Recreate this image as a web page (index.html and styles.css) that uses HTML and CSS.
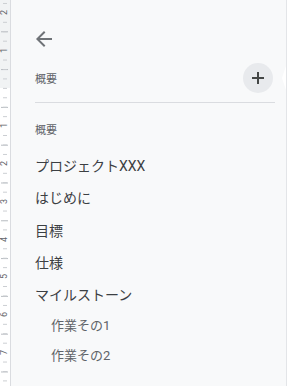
FILE: index.html
```html
<!DOCTYPE HTML>
<html>
<head>
    <meta charset="UTF-8">
    <title>概要</title>
    <link rel="stylesheet" href="styles.css">
</head>
<body>
    <div class="page">
        <div class="ruler">
            <div class="ruler-top"></div>
            <ul class="ruler-nums">
                <li><span>2</span></li>
                <li><span>1</span></li>
                <li></li>
                <li><span>1</span></li>
                <li><span>2</span></li>
                <li><span>3</span></li>
                <li><span>4</span></li>
                <li><span>5</span></li>
                <li><span>6</span></li>
                <li><span>7</span></li>
            </ul>
        </div>
        <div class="outline">
            <div class="back">
                <svg width="24" height="24" viewBox="0 0 24 24"><path fill="#6f7377" d="M20 11H7.83l5.59-5.59L12 4l-8 8 8 8 1.41-1.41L7.83 13H20v-2z"/></svg>
            </div>
            <div class="summary-head">
                <span class="label">概要</span>
                <div class="add-btn">
                    <svg width="12" height="12" viewBox="0 0 12 12"><path fill="#444746" d="M5 0h2v5h5v2H7v5H5V7H0V5h5z"/></svg>
                </div>
            </div>
            <div class="divider"></div>
            <div class="label sub-head">概要</div>
            <ul class="heading-list">
                <li>プロジェクトXXX</li>
                <li>はじめに</li>
                <li>目標</li>
                <li>仕様</li>
                <li>マイルストーン</li>
                <li class="level2">作業その1</li>
                <li class="level2">作業その2</li>
            </ul>
        </div>
        <div class="edge"></div>
    </div>
</body>
</html>
```
FILE: styles.css
```css
body{margin:0;font-family:Roboto,"Noto Sans CJK JP",sans-serif;}
ul,li{margin:0;padding:0;list-style:none;}

.page{
    display:flex;
    width:296px;
    height:386px;
    overflow:hidden;
    background-color:#fff;
}

/* 左のルーラー */
.ruler{
    position:relative;
    flex:0 0 10px;
    border-right:1px solid #dadce0;
    background-color:#fff;
    overflow:hidden;
}
.ruler-top{
    height:88px;
    background-color:#f1f3f4;
}
.ruler::before,
.ruler::after{
    content:'';
    position:absolute;
    top:0;
    bottom:0;
    background-repeat:repeat-y;
}
.ruler::before{
    left:1px;
    width:7px;
    background-image:linear-gradient(#b8bcc1 1px,transparent 1px);
    background-size:7px 37.8px;
    background-position:0 31.3px;
}
.ruler::after{
    left:3px;
    width:4px;
    background-image:linear-gradient(#c9ccd0 1px,transparent 1px);
    background-size:4px 9.45px;
    background-position:0 2.95px;
}
.ruler-nums{
    position:absolute;
    top:-6.5px;
    left:0;
    width:10px;
    z-index:1;
}
.ruler-nums li{
    display:flex;
    align-items:center;
    justify-content:center;
    height:37.8px;
}
.ruler-nums span{
    display:block;
    padding:1px 0;
    font-size:9px;
    line-height:9px;
    color:#5f6368;
    transform:rotate(-90deg);
    background-color:#fff;
}
.ruler-nums li:nth-child(-n+2) span{
    background-color:#f1f3f4;
}

/* アウトライン */
.outline{
    flex:0 0 275px;
    box-sizing:border-box;
    padding:0 11px 0 24px;
    background-color:#f8f9fa;
}
.back{
    width:24px;
    height:24px;
    margin:27px 0 0 -3px;
}
.back svg{display:block;}
.summary-head{
    display:flex;
    align-items:center;
    justify-content:space-between;
    height:30px;
    margin-top:12px;
}
.summary-head .label{
    padding-top:3px;
}
.label{
    font-size:11px;
    line-height:16px;
    color:#5f6368;
}
.add-btn{
    display:flex;
    align-items:center;
    justify-content:center;
    width:30px;
    height:30px;
    margin-right:2px;
    border-radius:50%;
    background-color:#e8eaed;
}
.add-btn svg{display:block;}
.divider{
    height:1px;
    margin-top:9px;
    background-color:#dadce0;
}
.sub-head{
    margin-top:20px;
}
.heading-list{
    margin-top:11px;
}
.heading-list li{
    height:32.25px;
    font-size:14px;
    line-height:32.25px;
    color:#3c4043;
    white-space:nowrap;
}
.heading-list li.level2{
    height:30px;
    padding-left:16px;
    font-size:13px;
    line-height:30px;
    color:#5f6368;
}

/* 右端 */
.edge{
    position:relative;
    flex:1;
    border-left:1px solid #e3e5e8;
    background-color:#fff;
}
.edge::before{
    content:'';
    position:absolute;
    top:66px;
    left:-5px;
    border-style:solid;
    border-width:12px 4px 12px 0;
    border-color:transparent #fff transparent transparent;
}
```
